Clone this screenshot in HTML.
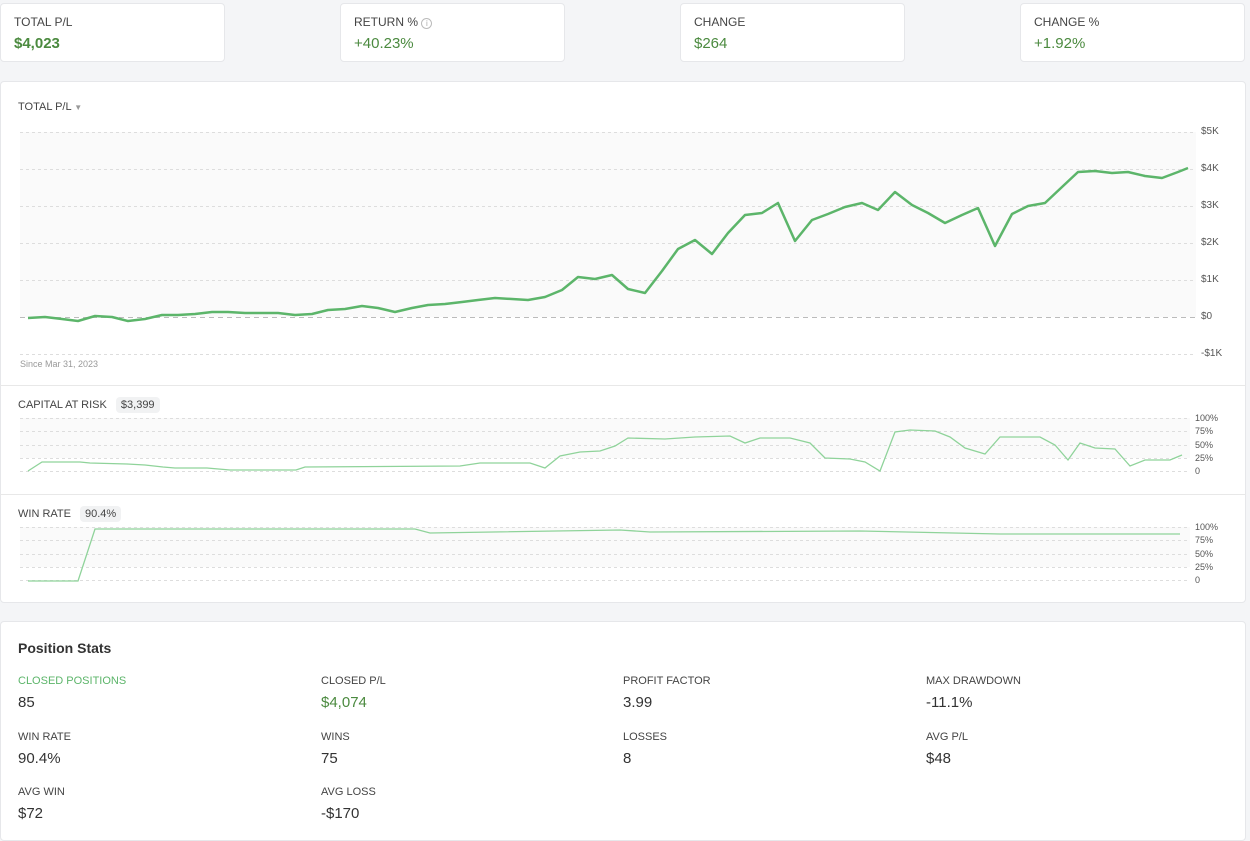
<!DOCTYPE html>
<html><head><style>
body{margin:0;width:1250px;height:830px;background:#f4f5f7;font-family:"Liberation Sans",sans-serif;color:#444;position:relative;overflow:hidden}
.card{position:absolute;top:3px;height:59px;width:225px;background:#fff;border:1px solid #e6e7ea;border-radius:4px;box-sizing:border-box}
.card .l{position:absolute;left:13px;top:11px;font-size:12px;color:#444}
.card .v{position:absolute;left:13px;top:31px;font-size:15px;color:#4b8a3f}
.panel{position:absolute;left:0;width:1246px;background:#fff;border:1px solid #e6e7ea;border-radius:4px;box-sizing:border-box}
.t{position:absolute;font-size:11px;color:#444}
.ax{position:absolute;font-size:10px;color:#555}
.badge{display:inline-block;background:#f1f2f3;border-radius:4px;padding:2px 5px;margin-left:6px;font-size:11px}
.sl{position:absolute;font-size:11px;color:#444}
.sv{position:absolute;font-size:15px;color:#333}
</style></head><body>
<div class="card" style="left:0"><div class="l">TOTAL P/L</div><div class="v" style="font-weight:bold">$4,023</div></div>
<div class="card" style="left:340px"><div class="l">RETURN % <span style="color:#aaa;border:1px solid #bbb;border-radius:50%;font-size:8px;display:inline-block;width:9px;height:9px;line-height:9px;text-align:center">i</span></div><div class="v">+40.23%</div></div>
<div class="card" style="left:680px"><div class="l">CHANGE</div><div class="v">$264</div></div>
<div class="card" style="left:1020px"><div class="l">CHANGE %</div><div class="v">+1.92%</div></div>

<div class="panel" style="top:81px;height:522px"></div>
<div class="t" style="left:18px;top:101px">TOTAL P/L <span style="color:#999;font-size:8px">▼</span></div>
<svg style="position:absolute;left:0;top:0" width="1250" height="620">
<rect x="20" y="132" width="1176" height="185" fill="#fafafa"/>
<g stroke="#ddd" stroke-dasharray="3,3" stroke-width="1">
<line x1="20" x2="1196" y1="132.5" y2="132.5"/><line x1="20" x2="1196" y1="169.5" y2="169.5"/><line x1="20" x2="1196" y1="206.5" y2="206.5"/><line x1="20" x2="1196" y1="243.5" y2="243.5"/><line x1="20" x2="1196" y1="280.5" y2="280.5"/><line x1="20" x2="1196" y1="354.5" y2="354.5"/>
</g>
<line x1="20" x2="1196" y1="317.5" y2="317.5" stroke="#bbb" stroke-dasharray="5,4"/>
<polyline fill="none" stroke="#5cb56a" stroke-width="2.5" stroke-linejoin="round" points="28,318 45,317 62,319 78,321 95,316 112,317 128,321 145,319 162,315 178,315 195,314 212,312 228,312 245,313 262,313 278,313 295,315 312,314 328,310 345,309 362,306 378,308 395,312 412,308 428,305 445,304 462,302 478,300 495,298 512,299 528,300 545,297 562,290 578,277 595,279 612,275 628,289 645,293 662,271 678,249 695,240 712,254 728,233 745,215 762,213 778,203 795,241 812,220 828,214 845,207 862,203 878,210 895,192 912,205 928,213 945,223 962,215 978,208 995,246 1012,214 1028,206 1045,203 1062,187 1078,172 1095,171 1112,173 1128,172 1145,176 1162,178 1178,172 1188,168"/>
<line x1="0" x2="1246" y1="385.5" y2="385.5" stroke="#e8e8e8"/>
<line x1="0" x2="1246" y1="494.5" y2="494.5" stroke="#e8e8e8"/>
<rect x="20" y="418" width="1170" height="40" fill="#fafafa"/>
<g stroke="#ddd" stroke-dasharray="3,3"><line x1="20" x2="1190" y1="418.5" y2="418.5"/><line x1="20" x2="1190" y1="431.5" y2="431.5"/><line x1="20" x2="1190" y1="445.5" y2="445.5"/><line x1="20" x2="1190" y1="458.5" y2="458.5"/><line x1="20" x2="1190" y1="471.5" y2="471.5"/></g>
<polyline fill="none" stroke="#8fd39a" stroke-width="1.3" points="28,471 42,462 80,462 90,463 127,464 145,465 163,467 175,468 207,468 230,470 296,470 305,467 460,466 480,463 530,463 545,468 560,456 580,452 600,451 615,446 628,438 665,439 695,437 730,436 745,443 760,438 790,438 810,443 825,458 850,459 865,462 880,471 895,432 910,430 935,431 950,437 965,448 985,454 1000,437 1040,437 1055,445 1068,460 1080,443 1095,448 1115,449 1130,466 1145,460 1170,460 1182,455"/>
<rect x="20" y="527" width="1170" height="40" fill="#fafafa"/>
<g stroke="#ddd" stroke-dasharray="3,3"><line x1="20" x2="1190" y1="527.5" y2="527.5"/><line x1="20" x2="1190" y1="540.5" y2="540.5"/><line x1="20" x2="1190" y1="554.5" y2="554.5"/><line x1="20" x2="1190" y1="567.5" y2="567.5"/><line x1="20" x2="1190" y1="580.5" y2="580.5"/></g>
<polyline fill="none" stroke="#8fd39a" stroke-width="1.3" points="28,581 78,581 95,529 415,529 430,533 620,530 650,532 860,531 1000,534 1180,534"/>
</svg>
<div class="ax" style="left:1201px;top:126px">$5K</div>
<div class="ax" style="left:1201px;top:163px">$4K</div>
<div class="ax" style="left:1201px;top:200px">$3K</div>
<div class="ax" style="left:1201px;top:237px">$2K</div>
<div class="ax" style="left:1201px;top:274px">$1K</div>
<div class="ax" style="left:1201px;top:311px">$0</div>
<div class="ax" style="left:1201px;top:348px">-$1K</div>
<div class="t" style="left:20px;top:359px;font-size:9px;color:#999">Since Mar 31, 2023</div>
<div class="t" style="left:18px;top:397px">CAPITAL AT RISK <span class="badge">$3,399</span></div>
<div class="ax" style="left:1195px;top:413px;font-size:9px">100%</div>
<div class="ax" style="left:1195px;top:426px;font-size:9px">75%</div>
<div class="ax" style="left:1195px;top:440px;font-size:9px">50%</div>
<div class="ax" style="left:1195px;top:453px;font-size:9px">25%</div>
<div class="ax" style="left:1195px;top:466px;font-size:9px">0</div>
<div class="t" style="left:18px;top:506px">WIN RATE <span class="badge">90.4%</span></div>
<div class="ax" style="left:1195px;top:522px;font-size:9px">100%</div>
<div class="ax" style="left:1195px;top:535px;font-size:9px">75%</div>
<div class="ax" style="left:1195px;top:549px;font-size:9px">50%</div>
<div class="ax" style="left:1195px;top:562px;font-size:9px">25%</div>
<div class="ax" style="left:1195px;top:575px;font-size:9px">0</div>

<div class="panel" style="top:621px;height:220px"></div>
<div style="position:absolute;left:18px;top:640px;font-size:14px;font-weight:bold;color:#333">Position Stats</div>
<div class="sl" style="left:18px;top:675px;color:#5cb56a">CLOSED POSITIONS</div><div class="sv" style="left:18px;top:694px">85</div>
<div class="sl" style="left:321px;top:675px">CLOSED P/L</div><div class="sv" style="left:321px;top:694px;color:#4b8a3f">$4,074</div>
<div class="sl" style="left:623px;top:675px">PROFIT FACTOR</div><div class="sv" style="left:623px;top:694px">3.99</div>
<div class="sl" style="left:926px;top:675px">MAX DRAWDOWN</div><div class="sv" style="left:926px;top:694px">-11.1%</div>
<div class="sl" style="left:18px;top:731px">WIN RATE</div><div class="sv" style="left:18px;top:750px">90.4%</div>
<div class="sl" style="left:321px;top:731px">WINS</div><div class="sv" style="left:321px;top:750px">75</div>
<div class="sl" style="left:623px;top:731px">LOSSES</div><div class="sv" style="left:623px;top:750px">8</div>
<div class="sl" style="left:926px;top:731px">AVG P/L</div><div class="sv" style="left:926px;top:750px">$48</div>
<div class="sl" style="left:18px;top:786px">AVG WIN</div><div class="sv" style="left:18px;top:805px">$72</div>
<div class="sl" style="left:321px;top:786px">AVG LOSS</div><div class="sv" style="left:321px;top:805px">-$170</div>
</body></html>
